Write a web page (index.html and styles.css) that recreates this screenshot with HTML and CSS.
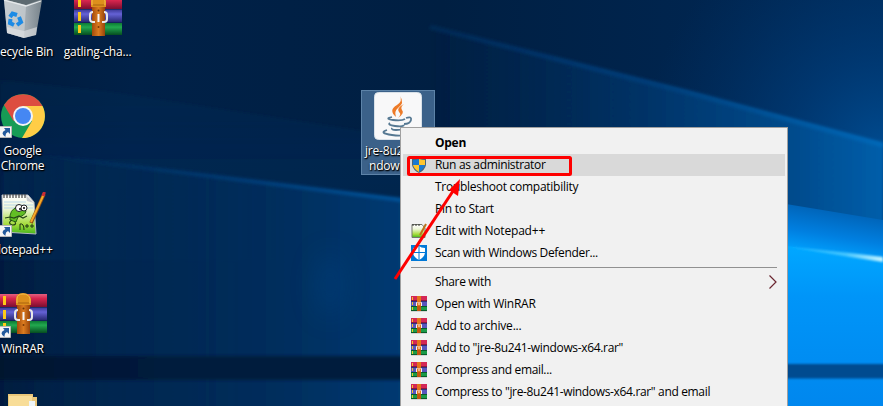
FILE: index.html
```
<!DOCTYPE html>
<html lang="en">
<head>
<meta charset="utf-8">
<title>Desktop</title>
<link rel="stylesheet" href="styles.css">
</head>
<body>
<main class="desktop">
<svg class="wallpaper" viewBox="0 0 883 406" preserveAspectRatio="none" aria-hidden="true">
  <defs>
    <linearGradient id="base" x1="0" y1="0" x2="883" y2="0" gradientUnits="userSpaceOnUse">
      <stop offset="0" stop-color="#001b3d"/><stop offset=".15" stop-color="#002148"/><stop offset=".5" stop-color="#001f42"/><stop offset=".8" stop-color="#00254f"/><stop offset="1" stop-color="#002a58"/>
    </linearGradient>
    <radialGradient id="glow" cx="883" cy="150" r="240" gradientUnits="userSpaceOnUse">
      <stop offset="0" stop-color="#004f96" stop-opacity=".9"/><stop offset=".4" stop-color="#004284" stop-opacity=".55"/><stop offset="1" stop-color="#003670" stop-opacity="0"/>
    </radialGradient>
    <linearGradient id="beam" x1="430" y1="0" x2="883" y2="0" gradientUnits="userSpaceOnUse">
      <stop offset="0" stop-color="#00264f" stop-opacity="0"/><stop offset=".5" stop-color="#00356a"/><stop offset=".8" stop-color="#004b8c"/><stop offset="1" stop-color="#005eaa"/>
    </linearGradient>
    <linearGradient id="beamedge" x1="430" y1="0" x2="883" y2="0" gradientUnits="userSpaceOnUse">
      <stop offset="0" stop-color="#00346b" stop-opacity=".4"/><stop offset=".5" stop-color="#003d78"/><stop offset="1" stop-color="#0068b8"/>
    </linearGradient>
    <linearGradient id="leftglow" x1="0" y1="0" x2="410" y2="0" gradientUnits="userSpaceOnUse">
      <stop offset="0" stop-color="#002550" stop-opacity=".1"/><stop offset=".25" stop-color="#002852" stop-opacity=".7"/><stop offset=".7" stop-color="#002e5e"/><stop offset="1" stop-color="#003b73"/>
    </linearGradient>
    <linearGradient id="rayedge" x1="40" y1="0" x2="410" y2="0" gradientUnits="userSpaceOnUse">
      <stop offset="0" stop-color="#003a75" stop-opacity="0"/><stop offset=".5" stop-color="#003c77" stop-opacity=".8"/><stop offset="1" stop-color="#00559d"/>
    </linearGradient>
    <linearGradient id="faint" x1="0" y1="60" x2="0" y2="200" gradientUnits="userSpaceOnUse">
      <stop offset="0" stop-color="#002a58" stop-opacity=".2"/><stop offset="1" stop-color="#002a58" stop-opacity=".5"/>
    </linearGradient>
    <linearGradient id="sill" x1="0" y1="0" x2="410" y2="0" gradientUnits="userSpaceOnUse">
      <stop offset="0" stop-color="#00152f"/><stop offset=".4" stop-color="#001a3c"/><stop offset="1" stop-color="#001b3c"/>
    </linearGradient>
    <linearGradient id="pane" x1="0" y1="250" x2="0" y2="406" gradientUnits="userSpaceOnUse">
      <stop offset="0" stop-color="#00a6ff"/><stop offset=".3" stop-color="#0095f8"/><stop offset="1" stop-color="#0087ee"/>
    </linearGradient>
    <linearGradient id="upperpane" x1="836" y1="210" x2="829" y2="253" gradientUnits="userSpaceOnUse">
      <stop offset="0" stop-color="#0063b7"/><stop offset=".6" stop-color="#007fe0"/><stop offset="1" stop-color="#009cfa"/>
    </linearGradient>
    <linearGradient id="flare" x1="788" y1="0" x2="883" y2="0" gradientUnits="userSpaceOnUse">
      <stop offset="0" stop-color="#19b5ff"/><stop offset=".6" stop-color="#45c6ff"/><stop offset="1" stop-color="#c5f3ff"/>
    </linearGradient>
    <filter id="soft" x="-10%" y="-10%" width="120%" height="120%"><feGaussianBlur stdDeviation="1.5"/></filter>
    <filter id="softer" x="-200%" y="-100%" width="500%" height="300%"><feGaussianBlur stdDeviation="12"/></filter>
    <filter id="fine" x="-10%" y="-50%" width="120%" height="200%"><feGaussianBlur stdDeviation=".8"/></filter>
  </defs>
  <rect width="883" height="406" fill="url(#base)"/>
  <rect x="600" width="283" height="300" fill="url(#glow)"/>
  <path d="M0 80L110 92L420 140V260H0Z" fill="url(#faint)" filter="url(#soft)"/>
  <path d="M430 26L560 59L690 92L883 144V230L430 135Z" fill="url(#beam)" filter="url(#fine)"/>
  <path d="M430 27L560 60L690 93L883 145" fill="none" stroke="url(#beamedge)" stroke-width="5" filter="url(#soft)"/>
  <path d="M-10 150L50 156L170 170L410 201V430H-10Z" fill="url(#leftglow)" filter="url(#fine)"/>
  <path d="M40 155L170 171L290 186L410 201" fill="none" stroke="url(#rayedge)" stroke-width="4" filter="url(#soft)"/>
  <ellipse cx="330" cy="285" rx="14" ry="32" fill="#003f7c" opacity=".5" filter="url(#softer)"/>
  <path d="M-10 356H410V380H-10Z" fill="url(#sill)" filter="url(#soft)"/>
  <path d="M780 203L883 220V406H780Z" fill="url(#upperpane)"/>
  <path d="M780 245L883 260V406H780Z" fill="url(#pane)"/>
  <path d="M786 246.500L850 253L883 257V262L850 257Z" fill="url(#flare)" filter="url(#fine)"/>
  <path d="M780 364H890V378.500H780Z" fill="#004b90" filter="url(#fine)"/>
</svg>

<svg class="defs" aria-hidden="true">
  <defs>
    <linearGradient id="red" x1="0" y1="0" x2="0" y2="1"><stop offset="0" stop-color="#e2607f"/><stop offset=".35" stop-color="#d6254d"/><stop offset="1" stop-color="#7b0e30"/></linearGradient>
    <linearGradient id="blue" x1="0" y1="0" x2="0" y2="1"><stop offset="0" stop-color="#3b3998"/><stop offset=".35" stop-color="#6562d6"/><stop offset="1" stop-color="#26266f"/></linearGradient>
    <linearGradient id="green" x1="0" y1="0" x2="0" y2="1"><stop offset="0" stop-color="#0c7a34"/><stop offset=".35" stop-color="#22a94f"/><stop offset="1" stop-color="#064d20"/></linearGradient>
    <linearGradient id="strap" x1="0" y1="0" x2="1" y2="0"><stop offset="0" stop-color="#a34a0a"/><stop offset=".5" stop-color="#db7c20"/><stop offset="1" stop-color="#97440a"/></linearGradient>
    <linearGradient id="bin" x1="0" y1="0" x2="1" y2="0"><stop offset="0" stop-color="#b4bcc1"/><stop offset=".6" stop-color="#a0a9af"/><stop offset="1" stop-color="#77838b"/></linearGradient>
    <linearGradient id="page" x1="0" y1="0" x2="0" y2="1"><stop offset="0" stop-color="#fff"/><stop offset=".35" stop-color="#eef6d8"/><stop offset=".75" stop-color="#a5dc3c"/><stop offset="1" stop-color="#45b51c"/></linearGradient>
    <symbol id="rar" viewBox="0 0 48 41">
      <rect y="1" width="48" height="13" fill="url(#red)"/>
      <rect y="14.500" width="48" height="13" fill="url(#blue)"/>
      <rect y="28" width="48" height="12" fill="url(#green)"/>
      <path d="M4 3h3v9H4zM4 17h3v9H4zM4 30h3v8H4z" fill="#ffc918"/>
      <rect x="18" y="12" width="13" height="29" fill="url(#strap)"/>
      <path d="M17 12V6q0-6 7-6t8 6v6z" fill="#dd8f1c"/>
      <path d="M18 10V6q0-5 6-5t7 5v4" fill="none" stroke="#f6bc46"/>
      <path d="M19 10h11" stroke="#a9620f"/>
      <path d="M19 17q-3 0-3 3v4q0 3 3 3h2M28 27h2q3 0 3-3v-4q0-3-3-3" fill="none" stroke="#e8e8e8" stroke-width="2"/>
      <path d="M24.500 19v8" stroke="#f5f5f5" stroke-width="2"/>
      <circle cx="24.500" cy="15.500" r="1" fill="#6b3306"/><circle cx="24.500" cy="32" r="1" fill="#7a3806"/>
    </symbol>
    <symbol id="rar-small" viewBox="0 0 16 16">
      <path fill="#d42755" d="M0 0h16v5H0z"/><path fill="#8c1740" d="M0 4h16v1H0z"/>
      <path fill="#5855bd" d="M0 5.500h16v4.500H0z"/><path fill="#32327d" d="M0 5h16v1H0z"/>
      <path fill="#1b9b47" d="M0 10h16v5H0z"/><path fill="#075c28" d="M0 10h16v1H0zM0 14h16v1H0z"/><path fill="#d5d5d5" d="M0 15h16v1H0z"/>
      <path fill="#f4c72b" d="M1 1h1v3H1zM1 6h1v3H1zM1 11h1v3H1z"/>
      <path fill="#e4751b" d="M6 0h4v15H6z"/><path fill="#c4560f" d="M6 10h4v5H6z"/>
      <path fill="none" stroke="#f5f1f5" d="M5.500 10V6.500h1M10.500 10V6.500h-1M8 6v3"/>
    </symbol>
    <symbol id="shortcut" viewBox="0 0 12 12">
      <path fill="#f5f5f5" stroke="#b7b7b7" d="M-1 .5h12.500v11H-1z"/>
      <path d="M4 2h6v6L8 6Q5 7 5.500 11Q-.500 7 5.500 4z" fill="#235a9c"/>
    </symbol>
  </defs>
</svg>

<section class="icon bin"><svg width="42" height="40" viewBox="0 0 42 40">
  <path d="M4 0L42 0L36 35L24 38L7 33Z" fill="url(#bin)"/>
  <path d="M4 0L26 6L24 38L7 33Z" fill="#d2d7da" opacity=".6"/>
  <path d="M6 0L26 5L40 0Z" fill="#5d6a71"/><path d="M4 0L26 6L41 1" fill="none" stroke="#e4e8ea" stroke-width="1.300"/>
  <path d="M7 27L24 31L37 27L36 35L24 38L7 33Z" fill="#e3e5e6" opacity=".6"/>
  <g fill="none" stroke="#1d8be5" stroke-width="4"><path d="M10 17l2.500-3.500 4.500 1.500"/><path d="M19 17l2 5-4 3"/><path d="M14 25l-4-2 .5-4"/></g>
</svg><span class="name">ecycle Bin</span></section>
<section class="icon gatling"><svg width="48" height="41"><use href="#rar"/></svg><span class="name">gatling-cha...</span></section>
<section class="icon chrome"><svg width="46" height="46" viewBox="0 0 46 46">
  <circle cx="23" cy="23" r="22" fill="#169c55"/>
  <path d="M4 12A22 22 0 0 1 42.500 13H23L13.500 28Z" fill="#dd4d40"/>
  <path d="M23 13H42.500A22 22 0 0 1 22 45L32 28Z" fill="#ffcd46"/>
  <circle cx="23" cy="23" r="10" fill="#f4f4f4"/><circle cx="23" cy="23" r="8" fill="#4587f3"/>
  <svg y="33" width="12" height="12"><use href="#shortcut"/></svg>
</svg><span class="name">Google</span><span class="name">Chrome</span></section>
<section class="icon notepad"><svg width="48" height="46" viewBox="0 0 48 46">
  <path d="M2 3L28 3L34 10L36 42L3 40Z" fill="url(#page)" stroke="#b5bac0"/>
  <path d="M26 3L34 11L27 9Z" fill="#c8cbd0"/>
  <path d="M4 10h22M4 13h29M4 16h29" stroke="#a9cfe8" stroke-width=".8"/>
  <path d="M4 2v4M7 2v4M10 2v4M13 2v4M16 2v4M19 2v4M22 2v4M25 2v4" stroke="#444" stroke-width="1.200"/>
  <path d="M10 28Q9 17 18 15L26 19Q25 24 18 25L16 30Z" fill="#62be24" stroke="#276310"/>
  <circle cx="19" cy="16" r="3.500" fill="#fff" stroke="#222"/><circle cx="24" cy="16" r="3" fill="#fff" stroke="#222"/>
  <circle cx="20" cy="17" r="1"/><circle cx="24" cy="16" r="1"/>
  <path d="M5 26l5-1 4 1 5-2 4 2 4-2M12 28q-5 3 0 5q5 0 3-3" stroke="#254318" stroke-width="1.200" fill="none"/>
  <path d="M20 38v-6q4-1 4 6M25 34h4M27 32v4M30 34h4M32 32v4" stroke="#1e3514" fill="none"/>
  <path d="M44 2L31 31" stroke="#8b4c16" stroke-width="3.500"/><path d="M43.500 3L31 30" stroke="#f4aa28" stroke-width="2"/><path d="M44.500 0L43 4" stroke="#c92c36" stroke-width="3"/>
  <svg y="33" width="12" height="12"><use href="#shortcut"/></svg>
</svg><span class="name">lotepad++</span></section>
<section class="icon winrar"><svg width="48" height="46" viewBox="0 0 48 46"><svg y="0" width="48" height="41"><use href="#rar"/></svg><svg y="33" width="12" height="12"><use href="#shortcut"/></svg></svg><span class="name">WinRAR</span></section>
<section class="icon folder"><svg width="30" height="13"><path d="M0 1H25V4H29V13H0Z" fill="#eac77a"/><path d="M1 3H24V13H1Z" fill="#f8dd98"/><path d="M21 8h6v5h-6z" fill="#eef5f8"/></svg></section>

<section class="icon java"><svg width="48" height="48" viewBox="0 0 48 48">
  <rect x=".5" y=".5" width="47" height="47" rx="4" fill="#f8f8f9" stroke="#d9e1e8"/>
  <path d="M26 4Q29 9 23 13Q14 18 22 25Q20 19 24 16Q31 11 26 4ZM30 12Q22 16 25 20Q28 22 24 26Q31 21 28 18Q26 15 30 12Z" fill="#ed7a27"/>
  <g fill="none" stroke="#557892" stroke-width="1.800"><path d="M18 25q-8 2 1 3t12-1M32 26q6-2 5 2t-7 4M16 31q-3 2 5 3t9-1M18 36q-1 2 4 2t7-1M13 38q-9 3 5 5t17-3"/></g>
</svg><span class="name">jre-8u2</span><span class="name second">ndow</span></section>

<nav class="menu">
  <div class="item open"><span>Open</span></div>
  <div class="item active"><svg width="16" height="16" viewBox="0 0 16 16"><path d="M8 0Q11 2 15 2V8Q14 13 8 16Q2 13 1 8V2Q5 2 8 0Z" fill="#496577"/><path d="M8 2V8H2V3Q5 3 8 2ZM8 8H14Q13 12 8 15Z" fill="#1979d1"/><path d="M8 2Q11 3 14 3V8H8ZM2 8H8V15Q3 12 2 8Z" fill="#fec52e"/></svg><span class="tight">Run as administrator</span></div>
  <div class="item"><span>Troubleshoot compatibility</span></div>
  <div class="item"><span>Pin to Start</span></div>
  <div class="item"><svg width="16" height="16" viewBox="0 0 16 16"><path d="M1 1.500H11L14 5V14.500H1Z" fill="url(#page)" stroke="#72776d"/><path d="M2 1v2M5 1v2M8 1v2" stroke="#333"/><path d="M15 1L9 12" stroke="#bb731c" stroke-width="2"/></svg><span class="wide">Edit with Notepad++</span></div>
  <div class="item"><svg width="16" height="16" viewBox="0 0 16 16"><path d="M0 0H16V16H0Z" fill="#0078d7"/><path d="M8 1Q10 3 14 3V7Q14 12 8 15Q2 12 2 7V3Q6 3 8 1Z" fill="#fff"/><path d="M8 1V15M2 7.500H14" stroke="#0078d7"/></svg><span class="tight">Scan with Windows Defender...</span></div>
  <hr>
  <div class="item"><span class="tight">Share with</span><svg class="chevron" width="8" height="14" viewBox="0 0 8 14"><path d="M.5 .5L7 7L.5 13.500" fill="none" stroke="#6b2630" stroke-width="1.200"/></svg></div>
  <div class="item"><svg width="16" height="16"><use href="#rar-small"/></svg><span>Open with WinRAR</span></div>
  <div class="item"><svg width="16" height="16"><use href="#rar-small"/></svg><span class="wide">Add to archive...</span></div>
  <div class="item"><svg width="16" height="16"><use href="#rar-small"/></svg><span class="tight">Add to "jre-8u241-windows-x64.rar"</span></div>
  <div class="item"><svg width="16" height="16"><use href="#rar-small"/></svg><span class="tight">Compress and email...</span></div>
  <div class="item"><svg width="16" height="16"><use href="#rar-small"/></svg><span class="tight">Compress to "jre-8u241-windows-x64.rar" and email</span></div>
</nav>
<svg class="annotation" viewBox="0 0 883 406" aria-hidden="true"><rect x="408.500" y="157.500" width="162" height="17" rx="1" fill="none" stroke="#fe0000" stroke-width="3"/><path d="M395 279L455 188" stroke="#fe0000" stroke-width="3"/><path d="M460 179L458 196L449 190Z" fill="#fe0000"/></svg>
</main>
</body>
</html>
```
FILE: styles.css
```
* { box-sizing: border-box; }
body { margin: 0; font-family: "Open Sans", "Noto Sans", sans-serif; font-size: 12px; }
.desktop { position: relative; width: 883px; height: 406px; overflow: hidden; background: #00214a; }
.wallpaper, .annotation { position: absolute; inset: 0; width: 883px; height: 406px; }
.annotation { pointer-events: none; }
.defs { position: absolute; width: 0; height: 0; }
.icon { position: absolute; display: flex; flex-direction: column; align-items: center; width: 75px; }
.icon svg { flex: none; display: block; }
.name { color: #fff; line-height: 15px; text-align: center; white-space: nowrap; letter-spacing: -.2px; text-shadow: 1px 1px 1px #000, 0 1px 2px #000; }
.icon svg + .name { margin-top: 4px; }
.bin { left: 0; top: 0; align-items: flex-start; }
.gatling { left: 60px; top: -5px; }
.icon.gatling svg + .name { margin-top: 8px; }
.chrome { left: -15px; top: 93px; }
.notepad { left: 0; top: 192px; align-items: flex-start; }
.icon.notepad svg + .name { margin-left: -2px; }
.winrar { left: -15px; top: 293px; }
.icon.winrar svg + .name { margin-top: 2px; }
.folder { left: -15px; top: 393px; }
.java { left: 361px; top: 90px; width: 74px; height: 85px; padding-top: 1px; align-items: flex-start; border: 1px solid #5d83a8; background: #3b6189; }
.java svg { margin-left: 12px; }
.icon.java svg + .name { margin: 3px 0 0 3px; }
.java .second { margin-left: 7px; }
.menu { position: absolute; left: 400px; top: 127px; width: 388px; height: 300px; padding: 4px 2px; border: 1px solid #a0a0a0; background: #f1f1f1; color: #000; }
.item { display: grid; grid-template-columns: 16px 1fr auto; column-gap: 8px; align-items: center; height: 22px; padding: 0 8px; line-height: 22px; white-space: nowrap; letter-spacing: -.27px; }
.item span { grid-column: 2; grid-row: 1; justify-self: start; }
.item svg { grid-row: 1; }
.tight { letter-spacing: -.34px; }
.wide { letter-spacing: -.2px; }
.chevron { grid-column: 3; }
.active { background: #d9d9d9; }
.open { font-weight: 700; }
hr { height: 1px; margin: 3px 8px; border: 0; background: #919191; }
```
